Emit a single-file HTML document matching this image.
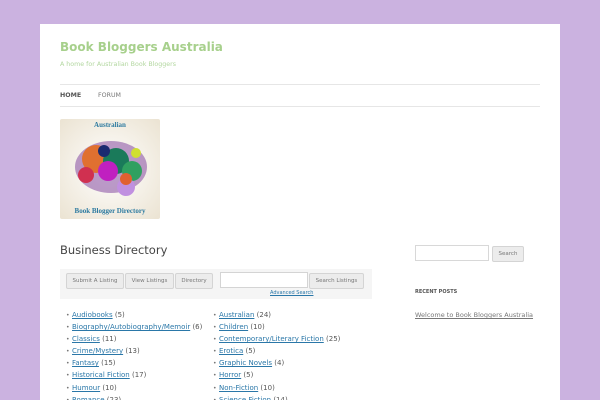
<html><head><style>
html,body{margin:0;height:400px;overflow:hidden}
body{background:#cbb2e0;width:600px;font-family:"DejaVu Sans","Liberation Sans",sans-serif;position:relative}
.p{position:absolute;left:40px;top:24px;width:520px;height:376px;background:#fff}
.a{position:absolute;white-space:nowrap}
.btn{position:absolute;height:14px;border:1px solid #d4d4d4;background:#ececec;border-radius:2px;font-size:5.5px;color:#777;line-height:14px;text-align:center}
ul{margin:0;padding:0;list-style:none}
li{font-size:7px;color:#555;height:12.1px;line-height:12px}
li:before{content:"•";font-size:6px;color:#777;display:inline-block;width:6px}
li a{color:#2a77a8;text-decoration:underline}
</style></head><body>
<div class="p"></div>
<div class="a" style="left:60px;top:40px;font-size:12px;font-weight:bold;color:#a7d08c">Book Bloggers Australia</div>
<div class="a" style="left:60px;top:61px;font-size:6.3px;color:#b3d7a0">A home for Australian Book Bloggers</div>
<div class="a" style="left:60px;top:84px;width:480px;border-top:1px solid #e6e6e6"></div>
<div class="a" style="left:60px;top:92px;font-size:6.3px;font-weight:bold;color:#555">HOME</div>
<div class="a" style="left:98px;top:92px;font-size:6.3px;color:#777">FORUM</div>
<div class="a" style="left:60px;top:106px;width:480px;border-top:1px solid #e6e6e6"></div>
<div class="a" style="left:60px;top:119px;width:100px;height:100px;background:radial-gradient(#fff,#ebe3d2);border-radius:2px;overflow:hidden">
<div class="a" style="left:0;top:2px;width:100px;text-align:center;font-family:'Liberation Serif',serif;font-weight:bold;font-size:7px;color:#2c7aa0">Australian</div>
<svg class="a" style="left:6px;top:12px" width="88" height="72"><ellipse cx="45" cy="36" rx="36" ry="26" fill="#7a3a9a" opacity=".5"/><circle cx="30" cy="28" r="14" fill="#e07030"/><circle cx="50" cy="30" r="13" fill="#1a7a5a"/><circle cx="42" cy="40" r="10" fill="#c020c0"/><circle cx="66" cy="40" r="10" fill="#30a060"/><circle cx="60" cy="56" r="9" fill="#c090e0"/><circle cx="20" cy="44" r="8" fill="#d03050"/><circle cx="38" cy="20" r="6" fill="#1a2a70"/><circle cx="70" cy="22" r="5" fill="#d0e030"/><circle cx="60" cy="48" r="6" fill="#e06030"/></svg>
<div class="a" style="left:0;top:88px;width:100px;text-align:center;font-family:'Liberation Serif',serif;font-weight:bold;font-size:7px;color:#2c7aa0">Book Blogger Directory</div>
</div>
<div class="a" style="left:60px;top:243px;font-size:11.5px;color:#444">Business Directory</div>
<div class="a" style="left:60px;top:269px;width:312px;height:30px;background:#f5f5f5"></div>
<div class="btn" style="left:66px;top:273px;width:56px">Submit A Listing</div>
<div class="btn" style="left:125px;top:273px;width:47px">View Listings</div>
<div class="btn" style="left:175px;top:273px;width:36px">Directory</div>
<div class="a" style="left:220px;top:272px;width:86px;height:14px;border:1px solid #d4d4d4;background:#fff"></div>
<div class="btn" style="left:309px;top:273px;width:53px">Search Listings</div>
<div class="a" style="left:270px;top:290px;font-size:5px;color:#2a77a8;text-decoration:underline">Advanced Search</div>
<ul class="a" style="left:66px;top:309px">
<li><a>Audiobooks</a> (5)</li><li><a>Biography/Autobiography/Memoir</a> (6)</li><li><a>Classics</a> (11)</li><li><a>Crime/Mystery</a> (13)</li><li><a>Fantasy</a> (15)</li><li><a>Historical Fiction</a> (17)</li><li><a>Humour</a> (10)</li><li><a>Romance</a> (23)</li></ul>
<ul class="a" style="left:213px;top:309px">
<li><a>Australian</a> (24)</li><li><a>Children</a> (10)</li><li><a>Contemporary/Literary Fiction</a> (25)</li><li><a>Erotica</a> (5)</li><li><a>Graphic Novels</a> (4)</li><li><a>Horror</a> (5)</li><li><a>Non-Fiction</a> (10)</li><li><a>Science Fiction</a> (14)</li></ul>
<div class="a" style="left:415px;top:245px;width:72px;height:14px;border:1px solid #d8d8d8;background:#fff"></div>
<div class="btn" style="left:492px;top:246px;width:30px">Search</div>
<div class="a" style="left:415px;top:289px;font-size:5px;font-weight:bold;color:#555">RECENT POSTS</div>
<div class="a" style="left:415px;top:311px;font-size:6.5px;color:#777;text-decoration:underline">Welcome to Book Bloggers Australia</div>
</body></html>
